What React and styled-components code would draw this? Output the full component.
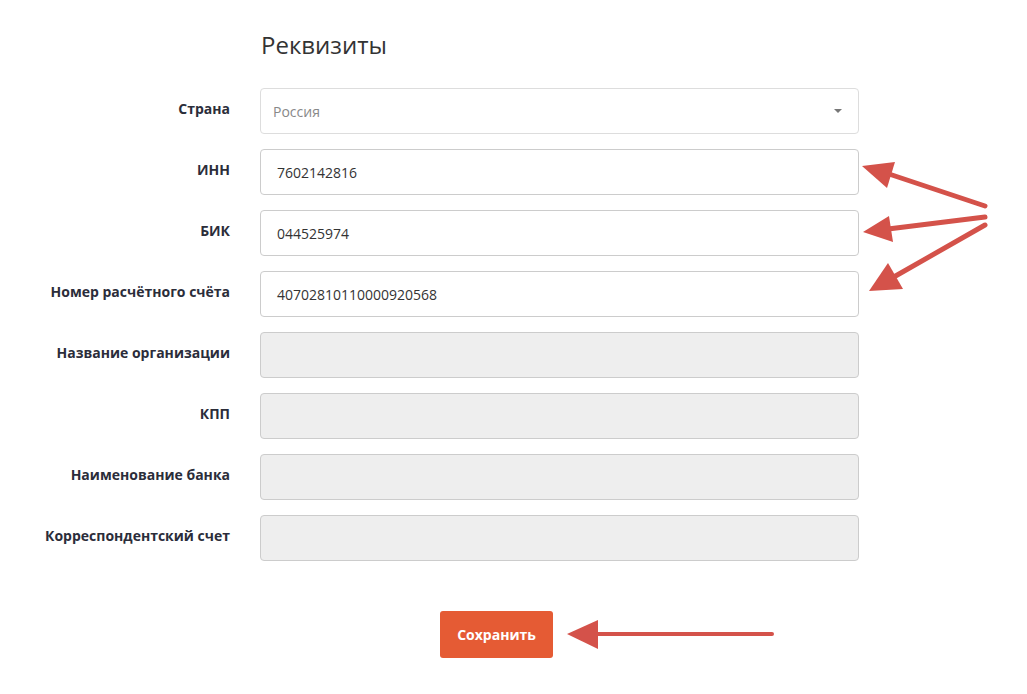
import React from 'react';
import styled, { createGlobalStyle } from 'styled-components';

const GlobalStyle = createGlobalStyle`
  html, body {
    margin: 0;
    padding: 0;
    background: #fff;
  }
  body {
    font-family: "Open Sans", "Liberation Sans", sans-serif;
    color: #333;
  }
`;

const fields = [
  { label: 'ИНН', value: '7602142816' },
  { label: 'БИК', value: '044525974' },
  { label: 'Номер расчётного счёта', value: '40702810110000920568' },
  { label: 'Название организации', disabled: true },
  { label: 'КПП', disabled: true },
  { label: 'Наименование банка', disabled: true },
  { label: 'Корреспондентский счет', disabled: true },
];

const App = () => {
  return (
    <>
      <GlobalStyle />
      <Page>
        <Form>
          <Spacer />
          <Title>Реквизиты</Title>

          <Label>Страна</Label>
          <Select>
            <span>Россия</span>
            <Caret />
          </Select>

          {fields.map((f) => (
            <React.Fragment key={f.label}>
              <Label>{f.label}</Label>
              <Input $disabled={f.disabled}>{f.value}</Input>
            </React.Fragment>
          ))}
        </Form>

        <ButtonRow>
          <SaveButton>Сохранить</SaveButton>
        </ButtonRow>

        {/* annotation arrows drawn over the form */}
        <Arrows width="1027" height="694" viewBox="0 0 1027 694">
          <g stroke="#d4524a" strokeWidth="5" strokeLinecap="round" fill="none">
            <line x1="985" y1="206" x2="880" y2="171" />
            <line x1="985" y1="217" x2="880" y2="230" />
            <line x1="985" y1="225" x2="885" y2="282" />
          </g>
          <line x1="772" y1="634" x2="585" y2="634" stroke="#d4524a" strokeWidth="4" strokeLinecap="round" />
          <g fill="#d4524a">
            <polygon points="862,166 895,162 887,188" />
            <polygon points="863,232 889,216 893,242" />
            <polygon points="869,291 888,263 903,289" />
            <polygon points="567,634 598,620 598,649" />
          </g>
        </Arrows>
      </Page>
    </>
  );
};

const Page = styled.div`
  position: relative;
  width: 1027px;
  height: 694px;
  padding-top: 32px;
  box-sizing: border-box;
  overflow: hidden;
`;

const Form = styled.div`
  display: grid;
  grid-template-columns: 230px 599px;
  column-gap: 30px;
  row-gap: 15px;
`;

const Spacer = styled.div``;

const Title = styled.h2`
  margin: 0 0 15px 1px;
  font-size: 24px;
  line-height: 26px;
  font-weight: 400;
  color: #333;
`;

const Label = styled.label`
  padding-top: 11px;
  text-align: right;
  font-size: 14px;
  line-height: 20px;
  font-weight: 700;
  color: #2b2d3a;
`;

const Select = styled.div`
  height: 46px;
  box-sizing: border-box;
  border: 1px solid #ddd;
  border-radius: 4px;
  padding: 0 16px 0 12px;
  display: flex;
  align-items: center;
  justify-content: space-between;
  font-size: 14px;
  color: #888;
  background: #fff;
`;

const Caret = styled.span`
  width: 0;
  height: 0;
  border-left: 4px solid transparent;
  border-right: 4px solid transparent;
  border-top: 4px solid #777;
`;

const Input = styled.div`
  height: 46px;
  box-sizing: border-box;
  border: 1px solid #ccc;
  border-radius: 4px;
  padding: 0 16px;
  display: flex;
  align-items: center;
  font-size: 14px;
  color: #333;
  background: ${(p) => (p.$disabled ? '#eeeeee' : '#fff')};
`;

const ButtonRow = styled.div`
  padding: 50px 0 0 440px;
`;

const SaveButton = styled.button`
  width: 113px;
  height: 47px;
  border: none;
  border-radius: 3px;
  background: #e55b34;
  color: #fff;
  font-family: "Open Sans", "Liberation Sans", sans-serif;
  font-size: 14px;
  font-weight: 700;
  cursor: pointer;
`;

const Arrows = styled.svg`
  position: absolute;
  top: 0;
  left: 0;
  pointer-events: none;
`;

export default App;
